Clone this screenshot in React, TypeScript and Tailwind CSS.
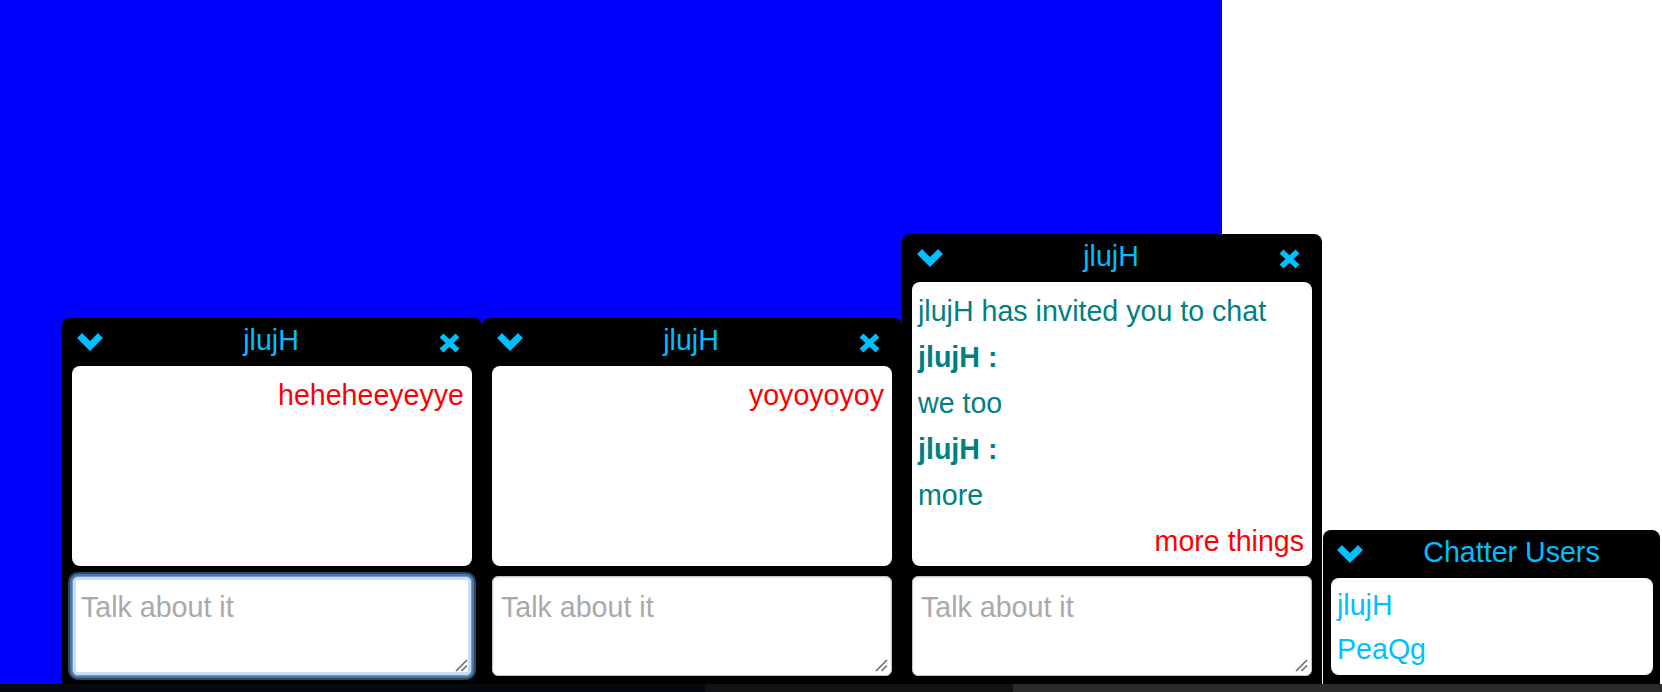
import React from "react";

const font = { fontFamily: '"Liberation Sans", Arial, Helvetica, sans-serif' };

function Chevron() {
  return (
    <svg width="26" height="18" viewBox="0 0 26 18" className="shrink-0">
      <polygon points="0,5 5,0 13,8 21,0 26,5 13,18" fill="#00bfff" />
    </svg>
  );
}

function Cross() {
  return (
    <svg width="21" height="20" viewBox="0 0 21 20" className="shrink-0">
      <line x1="2.5" y1="2.5" x2="18.5" y2="17.5" stroke="#00bfff" strokeWidth="5.5" />
      <line x1="18.5" y1="2.5" x2="2.5" y2="17.5" stroke="#00bfff" strokeWidth="5.5" />
    </svg>
  );
}

function Grip() {
  return (
    <svg width="13" height="13" viewBox="0 0 13 13" className="absolute right-[4px] bottom-[4px] pointer-events-none">
      <line x1="12" y1="1" x2="1" y2="12" stroke="#6b6b6b" strokeWidth="1.6" />
      <line x1="12" y1="6.5" x2="6.5" y2="12" stroke="#6b6b6b" strokeWidth="1.6" />
    </svg>
  );
}

type Msg = { text: string; kind: "sys" | "name" | "in" | "out" };

function ChatBox({ msgs, focused }: { msgs: Msg[]; focused?: boolean }) {
  return (
    <div className="w-[420px] bg-black rounded-t-[8px] flex flex-col pb-[8px]">
      <div className="h-[48px] flex items-start pl-[15px] pr-[22px] pt-[15px]">
        <Chevron />
        <div className="flex-1 text-center text-[28.6px] leading-[44px] -mt-[15px] text-[#00bfff]">jlujH</div>
        <Cross />
      </div>
      <div className="mx-[10px] bg-white rounded-[8px] min-h-[200px] pt-[6px] pb-[2px] pl-[6px] pr-[8px] text-[28.6px] leading-[46px]">
        {msgs.map((m, i) => (
          <div
            key={i}
            className={
              m.kind === "out"
                ? "text-right text-[#ff0000]"
                : m.kind === "name"
                ? "font-bold text-[#008080]"
                : "text-[#008080]"
            }
          >
            {m.text}
          </div>
        ))}
      </div>
      <div className="relative mx-[10px] mt-[10px]">
        <textarea
          placeholder="Talk about it"
          style={font}
          className={
            "block w-full h-[100px] resize-none rounded-[6px] bg-white px-[8px] pt-[14px] text-[28.6px] leading-[32px] outline-none placeholder:text-[#a9a9a9] " +
            (focused
              ? "border border-[#6d9ac8] shadow-[inset_0_0_0_3px_#c8dcf2,0_0_0_2px_#4a77a3,0_0_0_4px_#2a4866]"
              : "border border-[#c4c4c4] shadow-[inset_0_1px_2px_rgba(0,0,0,0.12)]")
          }
        />
        <Grip />
      </div>
    </div>
  );
}

export default function App() {
  return (
    <div style={font} className="w-[1662px] h-[692px] flex flex-col overflow-hidden bg-white">
      <div className="relative h-[684px] flex">
        <div className="w-[1222px] h-full bg-[#0000ff]" />
        <div className="flex-1 h-full bg-white" />
        <div className="absolute bottom-0 left-[62px] flex items-end">
          <ChatBox focused msgs={[{ text: "heheheeyeyye", kind: "out" }]} />
          <ChatBox msgs={[{ text: "yoyoyoyoy", kind: "out" }]} />
          <ChatBox
            msgs={[
              { text: "jlujH has invited you to chat", kind: "sys" },
              { text: "jlujH :", kind: "name" },
              { text: "we too", kind: "in" },
              { text: "jlujH :", kind: "name" },
              { text: "more", kind: "in" },
              { text: "more things", kind: "out" },
            ]}
          />
          <div className="ml-px w-[337px] bg-black rounded-t-[8px] flex flex-col pb-[9px]">
            <div className="h-[48px] flex items-start pl-[14px] pt-[15px]">
              <Chevron />
              <div className="flex-1 text-center text-[28.6px] leading-[44px] -mt-[15px] text-[#00bfff]">Chatter Users</div>
            </div>
            <div className="ml-[8px] mr-[7px] bg-white rounded-[8px] pt-[5px] pb-[4px] pl-[6px] text-[28.6px] leading-[44px] text-[#00bfff]">
              <div>jlujH</div>
              <div>PeaQg</div>
            </div>
          </div>
        </div>
      </div>
      <div className="h-[8px] flex">
        <div className="w-[705px] bg-[#03090e]" />
        <div className="w-[308px] bg-[#101214]" />
        <div className="flex-1 bg-[#2a2a2a]" />
      </div>
    </div>
  );
}
